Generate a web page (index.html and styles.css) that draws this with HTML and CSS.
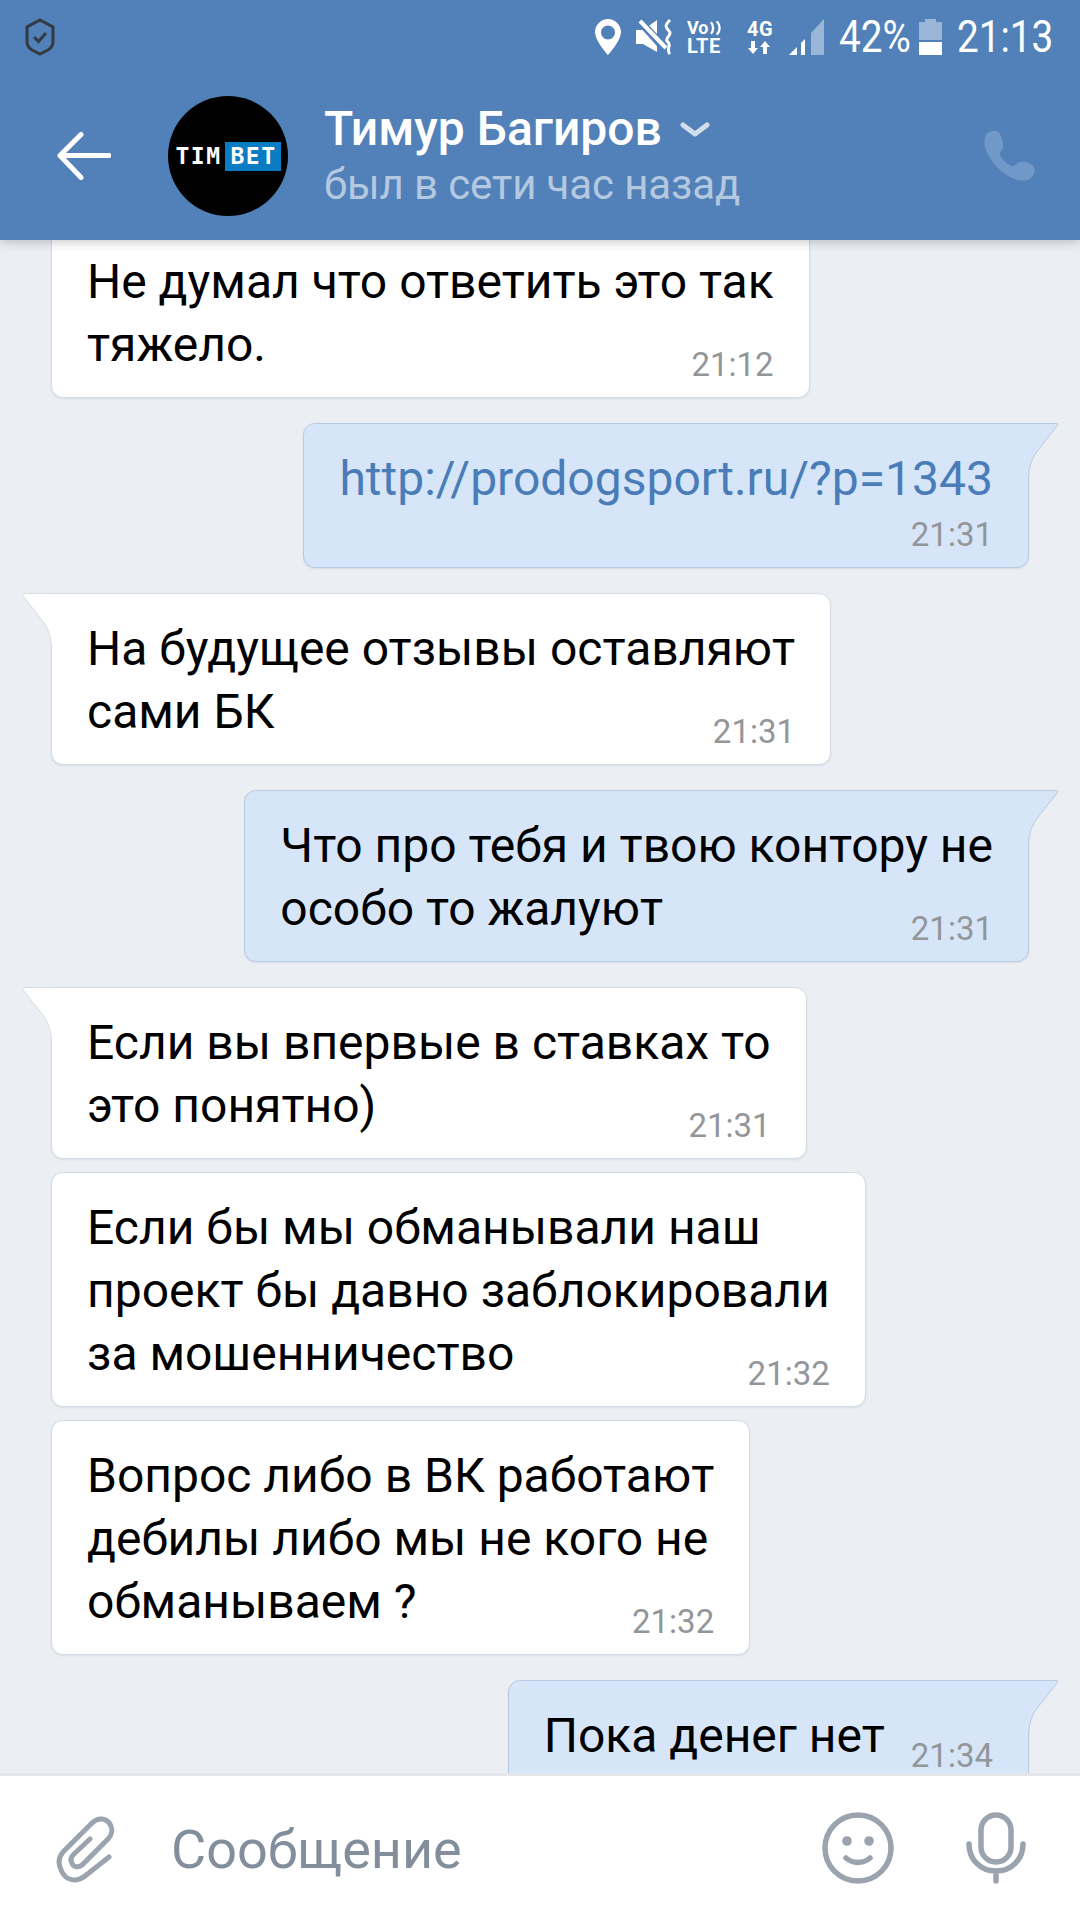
FILE: index.html
```html
<!DOCTYPE html>
<html lang="ru">
<head>
    <meta charset="UTF-8">
    <title>Тимур Багиров</title>
    <link rel="stylesheet" href="styles.css">
</head>
<body>
    <div class="app">
        <header class="header">
            <div class="status-bar">
                <svg class="shield" width="30" height="38" viewBox="0 0 30 38">
                    <path d="M15 2 L28 9 V24 C28 28 26 30 23 32 L15 36 L7 32 C4 30 2 28 2 24 V9 Z" fill="none" stroke="#333a42" stroke-width="3"/>
                    <path d="M9 19 L13.5 23.5 L21 15" fill="none" stroke="#333a42" stroke-width="3"/>
                </svg>
                <div class="status-right">
                    <svg class="pin" width="26" height="36" viewBox="0 0 26 36">
                        <path fill="#fff" fill-rule="evenodd" d="M13 0 C6 0 0 6 0 13 C0 22 13 36 13 36 S26 22 26 13 C26 6 20 0 13 0 Z M13 6.500 A7 7 0 1 1 13 20.500 A7 7 0 1 1 13 6.500 Z"/>
                    </svg>
                    <svg class="mute" width="38" height="36" viewBox="0 0 38 36">
                        <path fill="#fff" d="M0 11 H7 L21 1 V33 L7 25 H0 Z"/>
                        <path d="M2 0 L29 30" stroke="#5181b8" stroke-width="8"/>
                        <path d="M4 2 L30 29" stroke="#fff" stroke-width="4"/>
                        <path d="M34 1 C29 6 29 8 33 12 C37 16 29 18 31 22 C37 26 29 30 34 35" fill="none" stroke="#fff" stroke-width="3"/>
                    </svg>
                    <div class="volte">
                        <div class="vo">Vo<svg width="14" height="14" viewBox="0 0 14 14"><path d="M2 1 C5 4 5 10 2 13 M8 0 C12 4 12 10 8 14" fill="none" stroke="#fff" stroke-width="2.4"/></svg></div>
                        <div class="lte">LTE</div>
                    </div>
                    <div class="net">
                        <div class="net-label">4G</div>
                        <svg width="24" height="13" viewBox="0 0 24 13">
                            <path fill="#fff" d="M3 0 H7 V7 H10 L5 13 L0 7 H3 Z M15 13 V6 H12 L17 0 L22 6 H19 V13 Z"/>
                        </svg>
                    </div>
                    <svg class="signal" width="35" height="36" viewBox="0 0 35 36">
                        <path fill="#fff" d="M0 36 L8 28 V36 Z M12 24 L16 20 V36 H12 Z"/>
                        <path fill="#fff" opacity="0.42" d="M22 14 L35 0 V36 H22 Z"/>
                    </svg>
                    <span class="status-text percent">42%</span>
                    <svg class="battery" width="23" height="36" viewBox="0 0 23 36">
                        <path fill="#fff" opacity="0.42" d="M6 0 H17 V3 H23 V21 H0 V3 H6 Z"/>
                        <rect y="23" width="23" height="13" fill="#fff"/>
                    </svg>
                    <span class="status-text clock">21:13</span>
                </div>
            </div>
            <div class="toolbar">
                <svg class="back" width="54" height="48" viewBox="0 0 54 48">
                    <path d="M52 23.500 H3 M24 2.500 L3 23.500 L24 45.500" fill="none" stroke="#fff" stroke-width="5" stroke-linecap="round" stroke-linejoin="round"/>
                </svg>
                <div class="avatar">
                    <span class="logo-tim">TIM</span><span class="logo-bet">BET</span>
                </div>
                <div class="peer">
                    <div class="peer-name">Тимур Багиров
                        <svg class="chevron" width="30" height="16" viewBox="0 0 30 16">
                            <path d="M3 3 L15 12 L27 3" fill="none" stroke="#d3deeb" stroke-width="5" stroke-linecap="round" stroke-linejoin="round"/>
                        </svg>
                    </div>
                    <div class="peer-status">был в сети час назад</div>
                </div>
                <svg class="phone" width="52" height="52" viewBox="0 0 52 52">
                    <path fill="#7098c8" d="M3 5 C6 0 15 -1 17 4 C19 9 21 14 20 18 C19 21 16 22 17 25 C20 31 24 34 29 36 C32 37 33 33 37 32 C42 31 48 33 51 37 C53 42 50 48 45 50 C36 53 24 47 15 38 C6 29 -2 15 3 5 Z"/>
                </svg>
            </div>
        </header>

        <main class="messages">
            <div class="bubble in first">
                <div class="line">Не думал что ответить это так</div>
                <div class="last-row"><span class="line">тяжело.</span><span class="time">21:12</span></div>
            </div>

            <div class="bubble out">
                <svg class="tail" width="32" height="55" viewBox="0 0 32 55"><path class="tail-fill" d="M32 0 H3 Q0 0 2 3 L21 27 Q30 38 30 54 H32 Z"/><path class="tail-line" d="M32 .5 H3 Q0 .5 2 3 L21 27 Q30 38 30.500 54"/></svg>
                <a class="line link">http://prodogsport.ru/?p=1343</a>
                <div class="last-row end"><span class="time">21:31</span></div>
            </div>

            <div class="bubble in">
                <svg class="tail" width="32" height="55" viewBox="0 0 32 55"><path class="tail-fill" d="M32 0 H3 Q0 0 2 3 L21 27 Q30 38 30 54 H32 Z"/><path class="tail-line" d="M32 .5 H3 Q0 .5 2 3 L21 27 Q30 38 30.500 54"/></svg>
                <div class="line">На будущее отзывы оставляют</div>
                <div class="last-row"><span class="line">сами БК</span><span class="time">21:31</span></div>
            </div>

            <div class="bubble out">
                <svg class="tail" width="32" height="55" viewBox="0 0 32 55"><path class="tail-fill" d="M32 0 H3 Q0 0 2 3 L21 27 Q30 38 30 54 H32 Z"/><path class="tail-line" d="M32 .5 H3 Q0 .5 2 3 L21 27 Q30 38 30.500 54"/></svg>
                <div class="line">Что про тебя и твою контору не</div>
                <div class="last-row"><span class="line">особо то жалуют</span><span class="time">21:31</span></div>
            </div>

            <div class="bubble in">
                <svg class="tail" width="32" height="55" viewBox="0 0 32 55"><path class="tail-fill" d="M32 0 H3 Q0 0 2 3 L21 27 Q30 38 30 54 H32 Z"/><path class="tail-line" d="M32 .5 H3 Q0 .5 2 3 L21 27 Q30 38 30.500 54"/></svg>
                <div class="line">Если вы впервые в ставках то</div>
                <div class="last-row"><span class="line">это понятно)</span><span class="time">21:31</span></div>
            </div>

            <div class="bubble in next">
                <div class="line">Если бы мы обманывали наш</div>
                <div class="line">проект бы давно заблокировали</div>
                <div class="last-row"><span class="line">за мошенничество</span><span class="time">21:32</span></div>
            </div>

            <div class="bubble in next">
                <div class="line">Вопрос либо в ВК работают</div>
                <div class="line">дебилы либо мы не кого не</div>
                <div class="last-row"><span class="line">обманываем ?</span><span class="time">21:32</span></div>
            </div>

            <div class="bubble out">
                <svg class="tail" width="32" height="55" viewBox="0 0 32 55"><path class="tail-fill" d="M32 0 H3 Q0 0 2 3 L21 27 Q30 38 30 54 H32 Z"/><path class="tail-line" d="M32 .5 H3 Q0 .5 2 3 L21 27 Q30 38 30.500 54"/></svg>
                <div class="last-row"><span class="line">Пока денег нет</span><span class="time">21:34</span></div>
            </div>
        </main>

        <footer class="composer">
            <svg class="clip" width="60" height="69" viewBox="0 0 60 69">
                <path d="M54 43 L30 62 C21 69 11 66 7 58 C3 51 3 44 8 38 L37 9 C43 3 51 4 55 10 C58 15 57 21 53 25 L27 51 C23 54 18 53 17 49 C15 46 16 43 19 40 L35 25" fill="none" stroke="#9aa3ae" stroke-width="5" stroke-linecap="round"/>
            </svg>
            <div class="placeholder">Сообщение</div>
            <svg class="smile" width="72" height="72" viewBox="0 0 72 72">
                <circle cx="36" cy="36" r="33" fill="none" stroke="#9aa3ae" stroke-width="5.500"/>
                <circle cx="25" cy="29" r="4.800" fill="#9aa3ae"/>
                <circle cx="47" cy="29" r="4.800" fill="#9aa3ae"/>
                <path d="M24 46 C31 52 41 52 48 46" fill="none" stroke="#9aa3ae" stroke-width="5.500" stroke-linecap="round"/>
            </svg>
            <svg class="mic" width="60" height="72" viewBox="0 0 60 72">
                <rect x="15" y="3" width="30" height="47" rx="15" fill="none" stroke="#9aa3ae" stroke-width="5.500"/>
                <path d="M3 32 C3 47 14 59 30 59 C46 59 57 47 57 32 M30 59 V69" fill="none" stroke="#9aa3ae" stroke-width="5.500" stroke-linecap="round"/>
            </svg>
        </footer>
    </div>
</body>
</html>
```

FILE: styles.css
```css
* {
    box-sizing: border-box;
}
body {
    margin: 0;
    font-family: Roboto, Arial, sans-serif;
}
.app {
    width: 1080px;
    height: 1920px;
    display: flex;
    flex-direction: column;
    background-color: #ebeff4;
    overflow: hidden;
}

/* header */
.header {
    height: 240px;
    flex-shrink: 0;
    background-color: #5181b8;
    color: #fff;
    box-shadow: 0 2px 10px rgba(0, 0, 0, 0.22);
    position: relative;
    z-index: 2;
}
.status-bar {
    height: 76px;
    padding: 18px 28px 0 25px;
    display: flex;
    justify-content: space-between;
}
.status-right {
    display: flex;
    align-items: flex-start;
    padding-top: 1px;
}
.mute {
    margin-left: 15px;
}
.volte {
    margin-left: 13px;
    width: 35px;
    font-weight: 700;
    line-height: 18px;
}
.net {
    margin-left: 24px;
    margin-right: 15px;
    width: 28px;
    display: flex;
    flex-direction: column;
    align-items: center;
}
.vo {
    display: flex;
    align-items: center;
    font-size: 18px;
    height: 18px;
}
.lte {
    font-size: 20px;
    letter-spacing: 0.5px;
}
.net-label {
    font-size: 20px;
    font-weight: 700;
    line-height: 20px;
    letter-spacing: 0.5px;
    margin-bottom: 2px;
}
.status-text {
    display: inline-block;
    font-size: 45px;
    line-height: 36px;
    white-space: nowrap;
    transform-origin: left center;
    transform: scaleX(0.86);
}
.percent {
    width: 70px;
    margin-left: 15px;
}
.battery {
    margin-left: 10px;
}
.clock {
    width: 95px;
    margin-left: 15px;
}
.toolbar {
    height: 120px;
    margin-top: 20px;
    padding: 0 45px 0 57px;
    display: flex;
    align-items: center;
}
.avatar {
    width: 120px;
    height: 120px;
    margin-left: 57px;
    border-radius: 50%;
    background-color: #000;
    display: flex;
    align-items: center;
    justify-content: center;
    font-family: "DejaVu Sans Mono", monospace;
    font-weight: 700;
    font-size: 23px;
    letter-spacing: 1.5px;
    flex-shrink: 0;
}
.logo-bet {
    margin-left: 3px;
    padding: 1px 4px 1px 6px;
    background-color: #0a7cc4;
    line-height: 27px;
}
.peer {
    margin-left: 36px;
    flex: 1;
}
.peer-name {
    font-size: 48px;
    font-weight: 500;
    line-height: 52px;
    display: flex;
    align-items: center;
}
.chevron {
    margin-left: 18px;
    margin-top: 2px;
}
.peer-status {
    margin-top: 5px;
    font-size: 42px;
    letter-spacing: -0.12px;
    line-height: 50px;
    color: #b4c8e0;
}

/* messages */
.messages {
    flex: 1;
    min-height: 0;
    padding: 0 51px;
    overflow: hidden;
    display: flex;
    flex-direction: column;
    align-items: flex-start;
}
.bubble {
    position: relative;
    width: fit-content;
    margin-top: 25px;
    padding: 23px 35px 14px;
    flex-shrink: 0;
    border: 1px solid #d5dbe3;
    border-radius: 12px;
    background-color: #fff;
    box-shadow: 0 1px 2px rgba(80, 100, 130, 0.12);
    font-size: 48px;
    color: #000;
    white-space: nowrap;
}
.bubble.first {
    margin-top: -14px;
}
.bubble.next {
    margin-top: 13px;
}
.bubble.out {
    align-self: flex-end;
    border-color: #b8cbe3;
    background-color: #d6e6f8;
}
.line {
    display: block;
    line-height: 63px;
}
.link {
    color: #4a7cb8;
    margin-bottom: 7px;
}
.last-row {
    display: flex;
    justify-content: space-between;
    align-items: flex-end;
    gap: 26px;
}
.last-row .line {
    margin-bottom: 7px;
}
.last-row.end {
    justify-content: flex-end;
}
.time {
    font-size: 33px;
    line-height: 36px;
    color: #939699;
}

/* bubble tails */
.tail {
    position: absolute;
    top: -1px;
    left: -31px;
}
.bubble:has(.tail) {
    border-top-left-radius: 0;
}
.bubble.out:has(.tail) {
    border-top-left-radius: 12px;
    border-top-right-radius: 0;
}
.bubble.out .tail {
    left: auto;
    right: -31px;
    transform: scaleX(-1);
}
.tail-fill {
    fill: #fff;
}
.tail-line {
    fill: none;
    stroke: #d5dbe3;
    stroke-width: 1;
}
.bubble.out .tail-fill {
    fill: #d6e6f8;
}
.bubble.out .tail-line {
    stroke: #b8cbe3;
}

/* composer */
.composer {
    height: 147px;
    flex-shrink: 0;
    position: relative;
    z-index: 2;
    border-top: 3px solid #e4e6ea;
    background-color: #fff;
    padding: 0 54px 0 55px;
    display: flex;
    align-items: center;
}
.placeholder {
    margin-left: 56px;
    margin-top: 3px;
    flex: 1;
    font-size: 54px;
    color: #828e9b;
}
.mic {
    margin-left: 72px;
}
```
